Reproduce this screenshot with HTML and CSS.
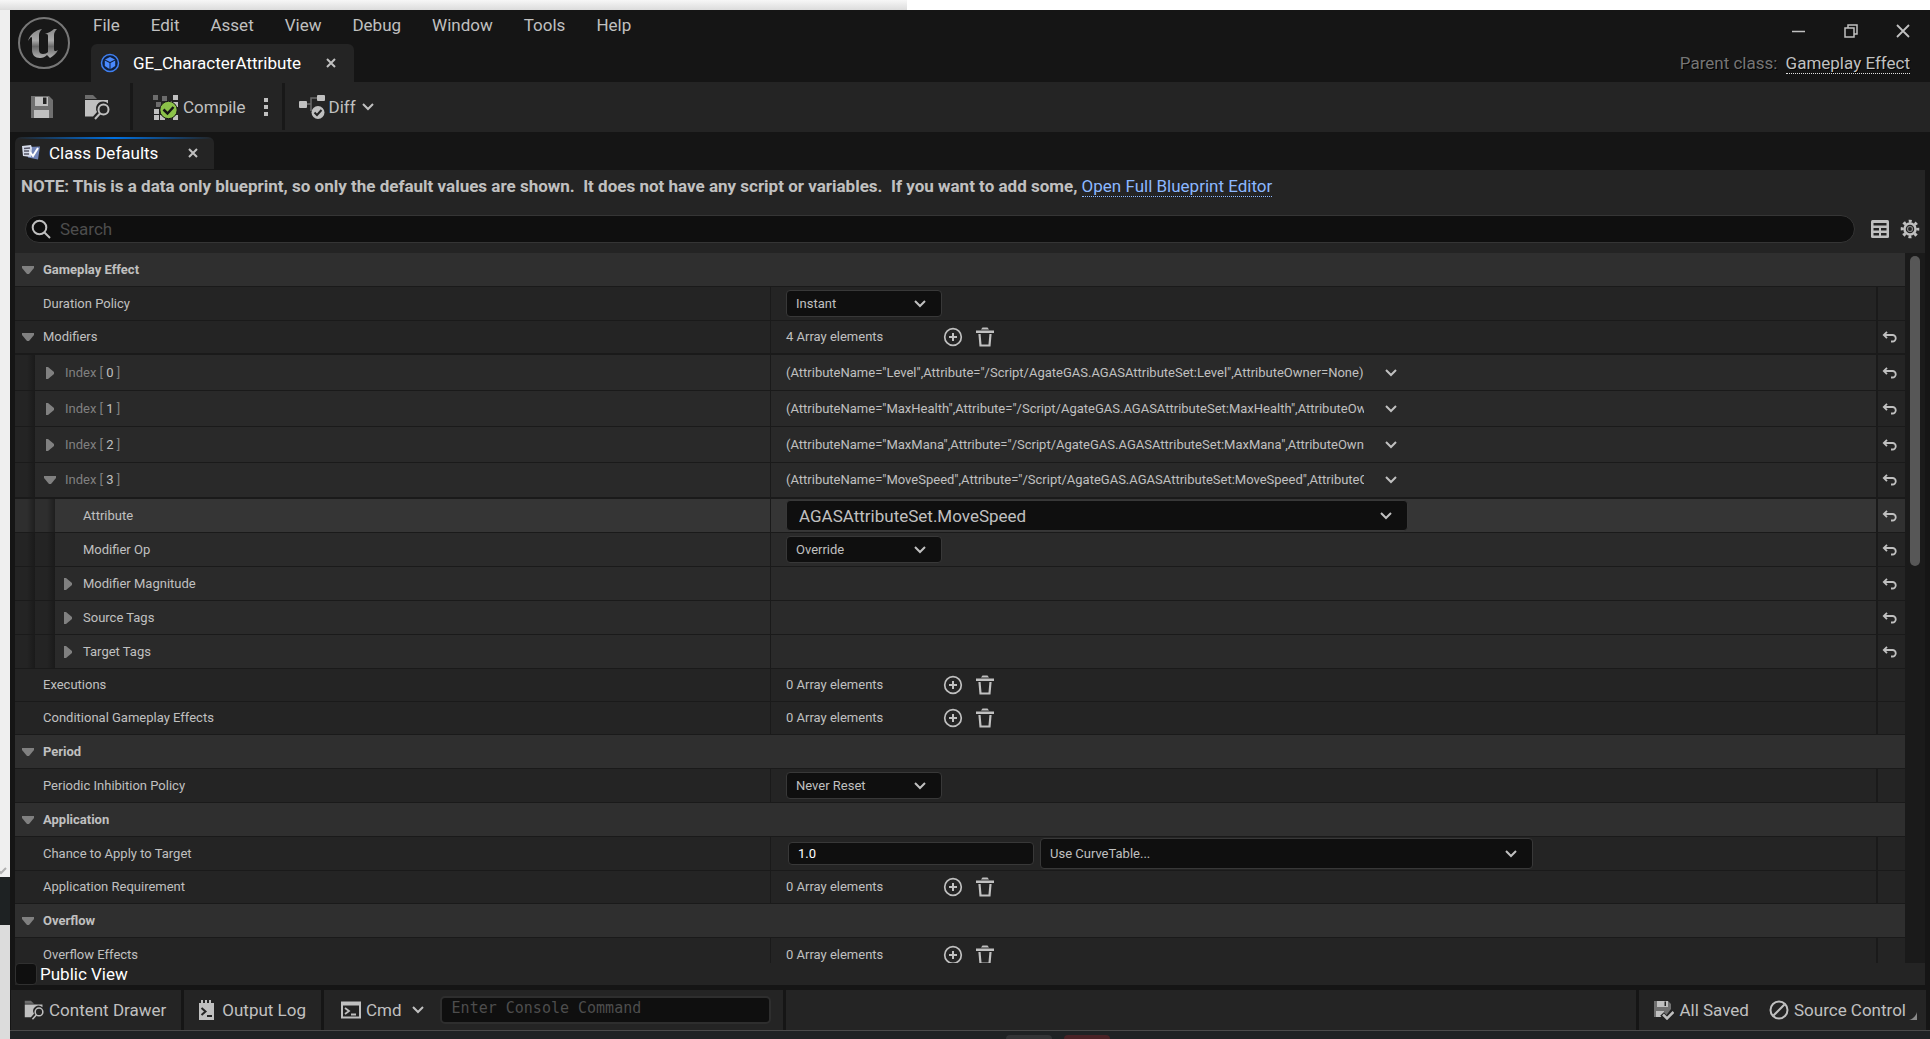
FILE: index.html
```html
<!DOCTYPE html>
<html lang="en">
<head>
  <meta charset="UTF-8">
  <meta name="viewport" content="width=device-width, initial-scale=1.0">
  <title>GE_CharacterAttribute</title>
  <link rel="stylesheet" href="styles.css">
</head>
<body>
  <!-- shared icons -->
  <svg class="sprite" aria-hidden="true">
    <symbol id="i-chevron" viewBox="0 0 12 8"><path d="M1 1l5 5 5-5" fill="none" stroke="currentColor" stroke-width="2"/></symbol>
    <symbol id="i-down" viewBox="0 0 12 12"><path d="M0 2h12v2L7 10H5L0 4z" fill="currentColor"/></symbol>
    <symbol id="i-right" viewBox="0 0 12 12"><path d="M2 0h2l6 5v2l-6 5H2z" fill="currentColor"/></symbol>
    <symbol id="i-close" viewBox="0 0 10 10"><path d="M1 1l8 8M9 1L1 9" stroke="currentColor" stroke-width="2"/></symbol>
    <symbol id="i-add" viewBox="0 0 20 20"><circle cx="10" cy="10" r="8.3" fill="none" stroke="currentColor" stroke-width="1.7"/><path d="M10 6v8M6 10h8" stroke="currentColor" stroke-width="2"/></symbol>
    <symbol id="i-trash" viewBox="0 0 20 20"><path d="M1 3.500h18v2.500H1zM6 2.500L7.500 .5h5L14 2.500z" fill="currentColor"/><path d="M4.500 7l1 11.500h9l1-11.500" fill="none" stroke="currentColor" stroke-width="2.200"/></symbol>
    <symbol id="i-reset" viewBox="0 0 16 12"><path d="M2 4h8.500a3.200 3.200 0 0 1 0 6.500H9" fill="none" stroke="currentColor" stroke-width="1.800"/><path d="M5 .8L1.800 4 5 7.200" fill="none" stroke="currentColor" stroke-width="1.800"/></symbol>
    <symbol id="i-folder" viewBox="0 0 26 26"><path d="M1 5V1h8l4 4z" fill="#6c6c6c"/><path d="M1 6h23v3.500a7 7 0 0 0-11 8.500l-4 4.500H1z" fill="#c0c0c0"/><circle cx="19.500" cy="15.500" r="5" fill="none" stroke="#c0c0c0" stroke-width="2"/><path d="M16 19.500l-5 5.500" stroke="#c0c0c0" stroke-width="2"/></symbol>
    <symbol id="i-save" viewBox="0 0 24 24"><path d="M1 1h18l4 4v18H1z" fill="#707070"/><path d="M5 2h13v9H5zM4 15h15v8H4z" fill="#c0c0c0"/><path d="M13 2.500h3.500V9H13z" fill="#242424"/></symbol>
  </svg>

  <div class="desktop" aria-hidden="true">
    <div class="strip-top"></div>
    <div class="strip-left"><svg class="strip-mark"><use href="#i-chevron"/></svg></div>
    <div class="strip-bottom"><span class="chip"></span><span class="chip chip-red"></span></div>
  </div>

  <div class="window">
    <header class="titlebar">
      <svg class="logo" viewBox="0 0 54 54">
        <defs><linearGradient id="metal" x1="0" y1="0" x2="0" y2="1"><stop offset="0" stop-color="#8a8a8a"/><stop offset=".4" stop-color="#a8a8a8"/><stop offset=".6" stop-color="#686868"/><stop offset="1" stop-color="#b0b0b0"/></linearGradient></defs>
        <circle cx="27" cy="27" r="25" fill="#181818" stroke="#777" stroke-width="2"/>
        <path d="M11 25c2-7 8-11 14-12-2 2-3 4-3 6v15c0 3 2 4 4 4 2 0 4-1 5-2V20c0-2-1-2-3-2 3-1 7-3 9-5h3c-2 2-3 4-3 6v14c0 2 1 3 4 1-2 4-5 6-8 8l-3-3c-2 2-4 3-7 3-5 0-8-3-8-8V23c0-3-1-3-4 2z" fill="url(#metal)"/>
      </svg>
      <div class="title-main">
        <nav class="menu">
          <button>File</button>
          <button>Edit</button>
          <button>Asset</button>
          <button>View</button>
          <button>Debug</button>
          <button>Window</button>
          <button>Tools</button>
          <button>Help</button>
        </nav>
        <div class="asset-tab">
          <svg class="icon-20" viewBox="0 0 20 20"><circle cx="10" cy="10" r="8.500" fill="#10203c" stroke="#3f7ff0" stroke-width="1.500"/><path d="M10 4l5 2.500-5 2.500-5-2.500zM4.800 7.500L9.500 10v6l-4.700-3zM15.200 7.500L10.500 10v6l4.700-3z" fill="#4a8aff"/></svg>
          <span>GE_CharacterAttribute</span>
          <button class="tab-close" aria-label="Close tab"><svg><use href="#i-close"/></svg></button>
        </div>
      </div>
      <div class="title-right">
        <div class="window-buttons">
          <button aria-label="Minimize"><svg viewBox="0 0 14 14"><path d="M0 7.500h13" stroke="currentColor" stroke-width="1.500"/></svg></button>
          <button aria-label="Restore"><svg viewBox="0 0 14 14"><path d="M1 4h9v9H1zM4 4V1h9v9h-3" fill="none" stroke="currentColor" stroke-width="1.500"/></svg></button>
          <button aria-label="Close"><svg viewBox="0 0 14 14"><path d="M1 1l12 12M13 1L1 13" stroke="currentColor" stroke-width="1.800"/></svg></button>
        </div>
        <p class="parent-class">Parent class: <a href="#">Gameplay Effect</a></p>
      </div>
    </header>

    <div class="toolbar">
      <div class="tool-group tool-files">
        <button aria-label="Save"><svg class="icon-24"><use href="#i-save"/></svg></button>
        <button aria-label="Browse to asset"><svg class="icon-26"><use href="#i-folder"/></svg></button>
      </div>
      <div class="tool-group tool-compile">
        <button>
          <svg class="icon-26" viewBox="0 0 26 26"><path d="M0 1h5v5H0zM9 2h5v5H9zM3 8h5v5H3z" fill="#6c6c6c"/><path d="M20 1h5v5h-5zM14 7h5v4h-5zM20 8h5v5h-5zM1 15h5v5H1zM1 21h5v5H1zM7 21h5v5H7zM20 21h5v5h-5z" fill="#c0c0c0"/><circle cx="15.500" cy="16" r="8.700" fill="#8bc249" stroke="#151515" stroke-width="1"/><path d="M10.500 15.500l4 4 6-6.500" fill="none" stroke="#151515" stroke-width="2.500"/></svg>
          Compile
        </button>
        <button class="dots" aria-label="Compile options"><svg viewBox="0 0 4 18"><path d="M0 0h4v4H0zM0 7h4v4H0zM0 14h4v4H0z" fill="currentColor"/></svg></button>
      </div>
      <div class="tool-group tool-diff">
        <button>
          <svg class="icon-26" viewBox="0 0 26 26"><path d="M7 10h5V4h6M12 10v7" fill="none" stroke="#6c6c6c" stroke-width="1.500"/><rect y="7" width="8" height="7" rx="1" fill="#c0c0c0"/><rect x="18" y="1" width="8" height="6" rx="1" fill="#c0c0c0"/><circle cx="19" cy="18.500" r="6.500" fill="#c0c0c0"/><path d="M15.500 18.500l2.500 2.500 4.500-5" fill="none" stroke="#242424" stroke-width="2"/></svg>
          Diff
          <svg class="chevron"><use href="#i-chevron"/></svg>
        </button>
      </div>
    </div>

    <div class="panel-tabs">
      <div class="panel-tab">
        <svg class="icon-20" viewBox="0 0 20 20"><path d="M6 4l13-.500-2 13-10-2z" fill="#7285b8"/><path d="M1 3l9-1 1 3-1 9-8-1z" fill="#d6dcea"/><path d="M3 5.500l6-.500M3 8h5M3 11h5" stroke="#556" stroke-width="1.500"/><path d="M9 9l3 4 5-8" fill="none" stroke="#fff" stroke-width="2"/></svg>
        <span>Class Defaults</span>
        <button class="tab-close" aria-label="Close panel"><svg><use href="#i-close"/></svg></button>
      </div>
    </div>

    <main class="panel">
      <p class="note">NOTE: This is a data only blueprint, so only the default values are shown.  It does not have any script or variables.  If you want to add some, <a href="#">Open Full Blueprint Editor</a></p>

      <div class="search-row">
        <div class="search-box">
          <svg viewBox="0 0 20 20"><circle cx="8.500" cy="8.500" r="6.800" fill="none" stroke="currentColor" stroke-width="2"/><path d="M13.500 13.500l5.500 5.500" stroke="currentColor" stroke-width="2"/></svg>
          <input type="text" placeholder="Search" aria-label="Search">
        </div>
        <button aria-label="Property matrix"><svg class="icon-20" viewBox="0 0 20 20"><rect x="1" y="1" width="18" height="18" rx="1.500" fill="#c0c0c0"/><path d="M3.500 4h13v2.500h-13zM3.500 9H9v2.500H3.500zM11 9h5.500v2.500H11zM3.500 14H9v2.500H3.500zM11 14h5.500v2.500H11z" fill="#242424"/></svg></button>
        <button aria-label="Settings"><svg class="icon-20" viewBox="0 0 20 20"><circle cx="10" cy="10" r="7.800" fill="none" stroke="#c0c0c0" stroke-width="3" stroke-dasharray="3 3.126" stroke-dashoffset="1.500"/><circle cx="10" cy="10" r="5.500" fill="none" stroke="#c0c0c0" stroke-width="2.500"/><circle cx="10" cy="10" r="2.500" fill="none" stroke="#8a8a8a" stroke-width="1.200"/></svg></button>
      </div>

      <div class="details">
        <div class="rows">
          <div class="row category">
            <div class="name"><svg class="arrow"><use href="#i-down"/></svg><span>Gameplay Effect</span></div>
          </div>
          <div class="row">
            <div class="name"><i class="arrow"></i><label for="duration">Duration Policy</label></div>
            <div class="value"><div class="combo"><select id="duration"><option>Instant</option></select><svg class="chevron"><use href="#i-chevron"/></svg></div></div>
            <div class="reset"></div>
          </div>
          <div class="row expanded">
            <div class="name"><svg class="arrow"><use href="#i-down"/></svg><span>Modifiers</span></div>
            <div class="value"><span class="count">4 Array elements</span><button aria-label="Add element"><svg class="icon-20"><use href="#i-add"/></svg></button><button aria-label="Remove all"><svg class="icon-20"><use href="#i-trash"/></svg></button></div>
            <div class="reset"><button aria-label="Reset"><svg><use href="#i-reset"/></svg></button></div>
          </div>
          <div class="row depth-1">
            <div class="name"><i class="gutter"></i><svg class="arrow"><use href="#i-right"/></svg><span class="index">Index [ <b>0</b> ]</span></div>
            <div class="value"><span class="summary">(AttributeName="Level",Attribute="/Script/AgateGAS.AGASAttributeSet:Level",AttributeOwner=None)</span><button aria-label="Element options"><svg class="chevron"><use href="#i-chevron"/></svg></button></div>
            <div class="reset"><button aria-label="Reset"><svg><use href="#i-reset"/></svg></button></div>
          </div>
          <div class="row depth-1">
            <div class="name"><i class="gutter"></i><svg class="arrow"><use href="#i-right"/></svg><span class="index">Index [ <b>1</b> ]</span></div>
            <div class="value"><span class="summary">(AttributeName="MaxHealth",Attribute="/Script/AgateGAS.AGASAttributeSet:MaxHealth",AttributeOwner=None)</span><button aria-label="Element options"><svg class="chevron"><use href="#i-chevron"/></svg></button></div>
            <div class="reset"><button aria-label="Reset"><svg><use href="#i-reset"/></svg></button></div>
          </div>
          <div class="row depth-1">
            <div class="name"><i class="gutter"></i><svg class="arrow"><use href="#i-right"/></svg><span class="index">Index [ <b>2</b> ]</span></div>
            <div class="value"><span class="summary">(AttributeName="MaxMana",Attribute="/Script/AgateGAS.AGASAttributeSet:MaxMana",AttributeOwner=None)</span><button aria-label="Element options"><svg class="chevron"><use href="#i-chevron"/></svg></button></div>
            <div class="reset"><button aria-label="Reset"><svg><use href="#i-reset"/></svg></button></div>
          </div>
          <div class="row depth-1 expanded">
            <div class="name"><i class="gutter"></i><svg class="arrow"><use href="#i-down"/></svg><span class="index">Index [ <b>3</b> ]</span></div>
            <div class="value"><span class="summary">(AttributeName="MoveSpeed",Attribute="/Script/AgateGAS.AGASAttributeSet:MoveSpeed",AttributeOwner=None)</span><button aria-label="Element options"><svg class="chevron"><use href="#i-chevron"/></svg></button></div>
            <div class="reset"><button aria-label="Reset"><svg><use href="#i-reset"/></svg></button></div>
          </div>
          <div class="row depth-2 active">
            <div class="name"><i class="gutter"></i><i class="gutter"></i><i class="arrow"></i><label for="attribute">Attribute</label></div>
            <div class="value"><div class="combo combo-attribute"><select id="attribute"><option>AGASAttributeSet.MoveSpeed</option></select><svg class="chevron"><use href="#i-chevron"/></svg></div></div>
            <div class="reset"><button aria-label="Reset"><svg><use href="#i-reset"/></svg></button></div>
          </div>
          <div class="row depth-2">
            <div class="name"><i class="gutter"></i><i class="gutter"></i><i class="arrow"></i><label for="modifier-op">Modifier Op</label></div>
            <div class="value"><div class="combo"><select id="modifier-op"><option>Override</option></select><svg class="chevron"><use href="#i-chevron"/></svg></div></div>
            <div class="reset"><button aria-label="Reset"><svg><use href="#i-reset"/></svg></button></div>
          </div>
          <div class="row depth-2">
            <div class="name"><i class="gutter"></i><i class="gutter"></i><svg class="arrow"><use href="#i-right"/></svg><span>Modifier Magnitude</span></div>
            <div class="value"></div>
            <div class="reset"><button aria-label="Reset"><svg><use href="#i-reset"/></svg></button></div>
          </div>
          <div class="row depth-2">
            <div class="name"><i class="gutter"></i><i class="gutter"></i><svg class="arrow"><use href="#i-right"/></svg><span>Source Tags</span></div>
            <div class="value"></div>
            <div class="reset"><button aria-label="Reset"><svg><use href="#i-reset"/></svg></button></div>
          </div>
          <div class="row depth-2">
            <div class="name"><i class="gutter"></i><i class="gutter"></i><svg class="arrow"><use href="#i-right"/></svg><span>Target Tags</span></div>
            <div class="value"></div>
            <div class="reset"><button aria-label="Reset"><svg><use href="#i-reset"/></svg></button></div>
          </div>
          <div class="row compact">
            <div class="name"><i class="arrow"></i><span>Executions</span></div>
            <div class="value"><span class="count">0 Array elements</span><button aria-label="Add element"><svg class="icon-20"><use href="#i-add"/></svg></button><button aria-label="Remove all"><svg class="icon-20"><use href="#i-trash"/></svg></button></div>
            <div class="reset"></div>
          </div>
          <div class="row compact">
            <div class="name"><i class="arrow"></i><span>Conditional Gameplay Effects</span></div>
            <div class="value"><span class="count">0 Array elements</span><button aria-label="Add element"><svg class="icon-20"><use href="#i-add"/></svg></button><button aria-label="Remove all"><svg class="icon-20"><use href="#i-trash"/></svg></button></div>
            <div class="reset"></div>
          </div>
          <div class="row category">
            <div class="name"><svg class="arrow"><use href="#i-down"/></svg><span>Period</span></div>
          </div>
          <div class="row">
            <div class="name"><i class="arrow"></i><label for="inhibition">Periodic Inhibition Policy</label></div>
            <div class="value"><div class="combo"><select id="inhibition"><option>Never Reset</option></select><svg class="chevron"><use href="#i-chevron"/></svg></div></div>
            <div class="reset"></div>
          </div>
          <div class="row category">
            <div class="name"><svg class="arrow"><use href="#i-down"/></svg><span>Application</span></div>
          </div>
          <div class="row">
            <div class="name"><i class="arrow"></i><label for="chance">Chance to Apply to Target</label></div>
            <div class="value"><input class="number" id="chance" type="text" value="1.0"><div class="combo combo-curve"><select aria-label="Curve table"><option>Use CurveTable...</option></select><svg class="chevron"><use href="#i-chevron"/></svg></div></div>
            <div class="reset"></div>
          </div>
          <div class="row compact">
            <div class="name"><i class="arrow"></i><span>Application Requirement</span></div>
            <div class="value"><span class="count">0 Array elements</span><button aria-label="Add element"><svg class="icon-20"><use href="#i-add"/></svg></button><button aria-label="Remove all"><svg class="icon-20"><use href="#i-trash"/></svg></button></div>
            <div class="reset"></div>
          </div>
          <div class="row category">
            <div class="name"><svg class="arrow"><use href="#i-down"/></svg><span>Overflow</span></div>
          </div>
          <div class="row">
            <div class="name"><i class="arrow"></i><span>Overflow Effects</span></div>
            <div class="value"><span class="count">0 Array elements</span><button aria-label="Add element"><svg class="icon-20"><use href="#i-add"/></svg></button><button aria-label="Remove all"><svg class="icon-20"><use href="#i-trash"/></svg></button></div>
            <div class="reset"></div>
          </div>
        </div>
        <div class="scrollbar"><div class="thumb"></div></div>
      </div>

      <div class="public-view">
        <input type="checkbox" id="public-view">
        <label for="public-view">Public View</label>
      </div>
    </main>

    <footer class="statusbar">
      <button class="status-cell status-drawer"><svg class="icon-20"><use href="#i-folder"/></svg>Content Drawer</button>
      <button class="status-cell status-log">
        <svg class="icon-20" viewBox="0 0 20 20"><path d="M2 3h2V0h2v3h2V0h2v3h2V0h2v3h3v17H2z" fill="#c0c0c0"/><path d="M4.500 8l4 3.500-4 3.500M10 16h5" fill="none" stroke="#242424" stroke-width="2"/></svg>Output Log</button>
      <div class="status-cell status-cmd">
        <button>
          <svg class="icon-20" viewBox="0 0 20 20"><path d="M1 2.500h18v15H1z" fill="none" stroke="#c0c0c0" stroke-width="2"/><path d="M1 2h18v3.500H1z" fill="#c0c0c0"/><path d="M4 8l4 3-4 3M10 14.500h5" fill="none" stroke="#c0c0c0" stroke-width="1.800"/></svg>
          Cmd
          <svg class="chevron"><use href="#i-chevron"/></svg>
        </button>
        <input type="text" placeholder="Enter Console Command" aria-label="Console command">
      </div>
      <div class="status-cell status-fill"></div>
      <div class="status-cell status-right">
        <button><svg class="icon-20" viewBox="0 0 20 20"><path d="M0 1h14l3 3v5l-6 8H0z" fill="#707070"/><path d="M3 1h11v6H3zM2 11h8v6H2z" fill="#c0c0c0"/><path d="M10.500 1.500H12V6h-1.500z" fill="#242424"/><path d="M8 14l5 5 7-7" fill="none" stroke="#242424" stroke-width="5"/><path d="M9 14.500l4 4 6.500-6.500" fill="none" stroke="#c0c0c0" stroke-width="2.500"/></svg>All Saved</button>
        <button><svg class="icon-20" viewBox="0 0 20 20"><circle cx="10" cy="10" r="8.500" fill="none" stroke="#c0c0c0" stroke-width="2"/><path d="M4.500 15.500l11-11" stroke="#c0c0c0" stroke-width="2"/></svg>Source Control</button>
        <svg class="grip" viewBox="0 0 8 8"><path d="M8 0v8H0c4-1 7-4 8-8z" fill="#8a8a8a"/></svg>
      </div>
    </footer>
  </div>
</body>
</html>
```
FILE: styles.css
```css
* {
  box-sizing: border-box;
}
body {
  margin: 0;
  height: 100vh;
  padding: 10px 0 8px 10px;
  position: relative;
  overflow: hidden;
  background: #fff;
  color: #c0c0c0;
  font-family: Roboto, sans-serif;
  font-size: 17px;
  line-height: 20px;
}
button {
  display: flex;
  align-items: center;
  padding: 0;
  border: none;
  background: none;
  color: inherit;
  font: inherit;
  cursor: pointer;
}
input,
select {
  font: inherit;
  color: inherit;
}
p {
  margin: 0;
}
svg {
  display: block;
  flex: none;
}
.sprite {
  position: absolute;
  width: 0;
  height: 0;
}
.icon-20 {
  width: 20px;
  height: 20px;
}
.icon-24 {
  width: 24px;
  height: 24px;
}
.icon-26 {
  width: 26px;
  height: 26px;
}
.chevron {
  width: 12px;
  height: 8px;
}

/* what shows around the window */
.strip-top {
  position: absolute;
  top: 0;
  left: 0;
  width: 47%;
  height: 10px;
  background: linear-gradient(#f7f7f7, #dcdcdc);
}
.strip-left {
  position: absolute;
  top: 10px;
  bottom: 0;
  left: 0;
  width: 10px;
  background: linear-gradient(#efefef 0 867px, #1e2223 867px 915px, #dcdcdc 915px);
}
.strip-mark {
  position: absolute;
  top: 857px;
  left: -5px;
  width: 12px;
  height: 8px;
  color: #b0b0b0;
}
.strip-bottom {
  position: absolute;
  right: 0;
  bottom: 0;
  left: 10px;
  height: 8px;
  display: flex;
  align-items: flex-end;
  gap: 12px;
  padding-left: calc(50% + 31px);
  background: #1f2224;
}
.chip {
  width: 46px;
  height: 4px;
  border-radius: 4px 4px 0 0;
  background: #333436;
}
.chip-red {
  background: #4a2226;
}

.window {
  position: relative;
  height: 100%;
  display: flex;
  flex-direction: column;
  background: #151515;
  border-bottom: 1px solid #4a4a4a;
}

/* title bar */
.titlebar {
  height: 72px;
  display: flex;
  flex: none;
  padding-left: 7px;
}
.logo {
  width: 54px;
  height: 54px;
  margin-top: 6px;
}
.title-main {
  flex: 1;
  display: flex;
  flex-direction: column;
  justify-content: space-between;
  align-items: flex-start;
  padding: 5px 0 0 20px;
}
.menu {
  display: flex;
  gap: 31px;
  padding-left: 2px;
}
.asset-tab {
  height: 38px;
  display: flex;
  align-items: center;
  padding: 0 18px 0 9px;
  border-radius: 6px 6px 0 0;
  background: #242424;
  color: #fff;
}
.asset-tab span {
  margin: 0 25px 0 13px;
}
.tab-close {
  color: #c0c0c0;
}
.tab-close svg {
  width: 10px;
  height: 10px;
}
.title-right {
  display: flex;
  flex-direction: column;
  align-items: flex-end;
  padding: 14px 20px 0 0;
}
.window-buttons {
  display: flex;
  gap: 38px;
}
.window-buttons svg {
  width: 14px;
  height: 14px;
}
.parent-class {
  margin-top: 15px;
  color: #757575;
  text-shadow: 1px 1px 0 #000;
}
.parent-class a {
  margin-left: 4px;
  border-bottom: 1px dotted #e0e0e0;
  color: #c0c0c0;
  text-decoration: none;
}

/* toolbar */
.toolbar {
  height: 50px;
  display: flex;
  flex: none;
  padding: 1px 0 2px;
  background: #242424;
}
.tool-group {
  display: flex;
  align-items: center;
  border-right: 3px solid #181818;
}
.tool-files {
  gap: 30px;
  padding: 0 20px;
}
.tool-compile {
  gap: 18px;
  padding: 0 14px 0 20px;
}
.tool-compile button,
.tool-diff button {
  gap: 4px;
}
.tool-diff {
  padding-left: 14px;
  border: none;
}
.tool-diff .chevron {
  margin-left: 2px;
}
.dots svg {
  width: 4px;
  height: 18px;
}

/* panel */
.panel-tabs {
  flex: none;
  display: flex;
  padding: 5px 5px 1px;
}
.panel-tab {
  height: 32px;
  display: flex;
  align-items: center;
  padding: 0 16px 3px 6px;
  border-top: 2px solid transparent;
  border-radius: 6px 6px 0 0;
  background: linear-gradient(#242424, #242424) padding-box, linear-gradient(90deg, #242424, #0070e0, #242424) border-box;
  color: #fff;
}
.panel-tab span {
  margin: 0 30px 0 8px;
}
.panel {
  flex: 1;
  min-height: 0;
  display: flex;
  flex-direction: column;
  margin: 0 5px 5px;
  background: #242424;
}
.note {
  padding: 6px;
  font-weight: bold;
  white-space: pre;
}
.note a {
  border-bottom: 1px dotted #8cb8ff;
  color: #8cb8ff;
  font-weight: normal;
  text-decoration: none;
}
.search-row {
  display: flex;
  align-items: center;
  gap: 10px;
  padding: 13px 5px 10px 10px;
}
.search-box {
  flex: 1;
  height: 28px;
  display: flex;
  align-items: center;
  gap: 9px;
  margin-right: 5px;
  padding: 0 5px 1px;
  border: 1px solid #353535;
  border-radius: 14px;
  background: #0f0f0f;
}
.search-box svg {
  width: 20px;
  height: 20px;
}
.search-box input {
  flex: 1;
  padding: 0;
  border: none;
  background: none;
  outline: none;
}
::placeholder {
  color: #4d4d4d;
  opacity: 1;
}

/* property list */
.details {
  flex: 1;
  min-height: 0;
  display: flex;
  overflow: hidden;
}
.rows {
  flex: 1;
  font-size: 13px;
}
.row {
  height: 34px;
  display: grid;
  grid-template-columns: calc(40% - 1px) 1fr 29px;
  border-bottom: 1px solid #1a1a1a;
  background: #242424;
}
.category {
  background: #2f2f2f;
  font-weight: bold;
}
.compact {
  height: 33px;
}
.expanded {
  border-bottom-width: 2px;
}
.depth-1 {
  height: 36px;
  background: #292929;
}
.depth-2 {
  background: #2a2a2a;
}
.active {
  background: #353535;
}
.name {
  display: flex;
  align-items: center;
}
.gutter {
  align-self: stretch;
  width: 20px;
  background: linear-gradient(90deg, #242424 60%, #1a1a1a);
}
.active .gutter {
  background: linear-gradient(90deg, #2e2e2e 60%, #1e1e1e);
}
.arrow {
  width: 12px;
  height: 12px;
  margin: 0 9px 0 7px;
  color: #808080;
}
.depth-1 .arrow {
  margin-left: 9px;
}
.index {
  color: #808080;
}
.index b {
  color: #c0c0c0;
  font-weight: normal;
}
.value {
  min-width: 0;
  display: flex;
  align-items: center;
  padding-left: 15px;
  border-left: 1px solid #1a1a1a;
}
.count {
  width: 157px;
}
.value button + button {
  margin-left: 12px;
}
.summary {
  width: 578px;
  margin-right: 21px;
  overflow: hidden;
  white-space: nowrap;
}
.reset {
  display: flex;
  align-items: center;
  justify-content: center;
  padding-right: 3px;
  border-left: 2px solid #1a1a1a;
  background: #242424;
}
.active .reset {
  background: #303030;
}
.reset svg {
  width: 16px;
  height: 12px;
}
.combo {
  position: relative;
  width: 156px;
  height: 27px;
}
.combo select {
  width: 100%;
  height: 100%;
  padding: 0 9px;
  appearance: none;
  border: 1px solid #383838;
  border-radius: 4px;
  background: #0f0f0f;
}
.combo .chevron {
  position: absolute;
  top: calc(50% - 4px);
  right: 16px;
  pointer-events: none;
}
.combo-attribute {
  width: 622px;
  height: 31px;
  font-size: 17px;
}
.combo-attribute select {
  padding: 0 12px;
}
.combo-curve {
  width: 493px;
  height: 31px;
}
.number {
  width: 246px;
  height: 23px;
  margin: 0 6px 0 2px;
  padding: 0 9px;
  border: 1px solid #383838;
  border-radius: 4px;
  background: #0f0f0f;
  color: #fff;
}
.scrollbar {
  width: 20px;
  padding: 3px 5px;
  background: #1a1a1a;
}
.thumb {
  height: 44%;
  border-radius: 5px;
  background: #575757;
}
.public-view {
  height: 22px;
  display: flex;
  flex: none;
  align-items: center;
  gap: 3px;
  color: #fff;
}
.public-view input {
  width: 22px;
  height: 22px;
  margin: 0;
  appearance: none;
  border: 1px solid #303030;
  border-radius: 4px;
  background: #0f0f0f;
}

/* status bar */
.statusbar {
  height: 40px;
  display: flex;
  flex: none;
  gap: 3px;
  padding: 0 4px 0 1px;
}
.status-cell {
  display: flex;
  align-items: center;
  background: #242424;
}
.status-drawer,
.status-log {
  gap: 5px;
  padding: 0 15px 0 13px;
}
.status-cmd {
  gap: 16px;
  padding: 0 12px 0 17px;
}
.status-cmd button {
  gap: 5px;
}
.status-cmd .chevron {
  margin-left: 5px;
}
.status-cmd input {
  width: 331px;
  height: 28px;
  padding: 0 10px 4px;
  border: 2px solid #2e2e2e;
  border-radius: 5px;
  background: #0f0f0f;
  font-family: "DejaVu Sans Mono", monospace;
  font-size: 15px;
}
.status-fill {
  flex: 1;
}
.status-right {
  padding: 0 9px 0 15px;
}
.status-right button {
  gap: 5px;
}
.status-right button + button {
  margin-left: 20px;
}
.grip {
  align-self: flex-end;
  width: 8px;
  height: 8px;
  margin: 0 0 10px 3px;
}
```
